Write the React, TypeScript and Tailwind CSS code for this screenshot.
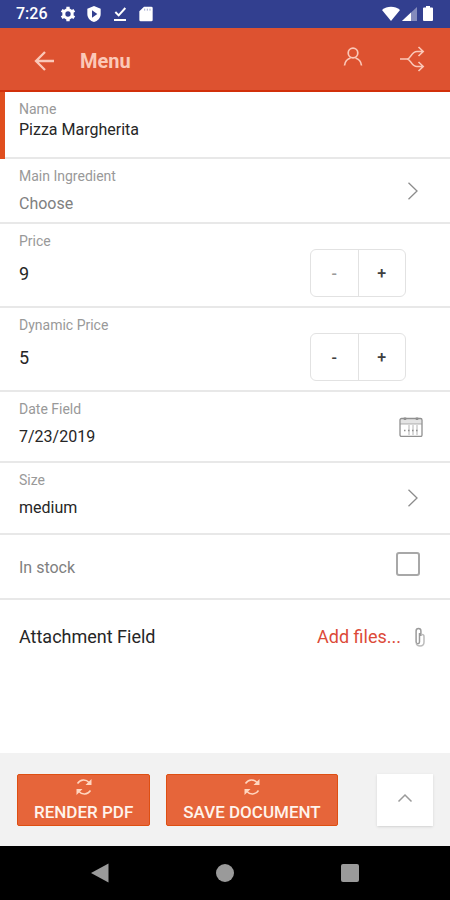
import { useState, type ReactNode } from "react";

const inputClass = "block h-6 w-full appearance-none bg-transparent p-0 leading-6 outline-none";

function StatusBar() {
  return (
    <div className="flex h-7 items-center justify-between bg-[#323f8f] px-4 text-white">
      <div className="flex items-center gap-[10px]">
        <span className="mr-[2px] text-base leading-6 font-medium">7:26</span>
        <svg viewBox="0 0 24 24" className="size-4" fill="none" stroke="currentColor">
          <circle cx="12" cy="12" r="6.300" strokeWidth="4.600" />
          <path
            d="M12 1v4M12 19v4M2.500 6.500l3.400 2M18.100 15.500l3.400 2M2.500 17.500l3.400-2M18.100 8.500l3.400-2"
            strokeWidth="5"
          />
        </svg>
        <svg viewBox="0 0 24 24" className="size-4" fill="currentColor">
          <path
            fillRule="evenodd"
            d="M12 0 2 4v8c0 6 4.300 10.500 10 12 5.700-1.500 10-6 10-12V4zM9 6.500 17 12l-8 5.500z"
          />
        </svg>
        <svg viewBox="0 0 24 24" className="size-4" fill="none" stroke="currentColor" strokeWidth="3">
          <path d="m5 9 5 5L20 3M3 21h18" />
        </svg>
        <svg viewBox="0 0 24 24" className="size-4" fill="currentColor">
          <path d="M9 1h11a2 2 0 0 1 2 2v18a2 2 0 0 1-2 2H4a2 2 0 0 1-2-2V8z" />
          <path d="M10 4v3M14 4v3M18 4v3" stroke="#7780b8" />
        </svg>
      </div>
      <div className="flex items-center">
        <svg viewBox="0 0 18 16" className="h-4 w-[18px]" fill="currentColor">
          <path d="M0 4C5-.3 13-.3 18 4L9 15z" />
        </svg>
        <svg viewBox="0 0 18 16" className="h-4 w-[18px]" fill="currentColor">
          <path d="M2 15 17 1v14z" opacity=".4" />
          <path d="M2 15 11 6.500V15z" />
        </svg>
        <svg viewBox="0 0 12 16" className="ml-1 h-4 w-3" fill="currentColor">
          <path d="M4 0h4v1.500h2q1 0 1 1V14q0 1-1 1H2q-1 0-1-1V2.500q0-1 1-1h2z" />
        </svg>
      </div>
    </div>
  );
}

function Header() {
  return (
    <header className="flex h-16 items-center border-b-2 border-[#d2300a] bg-[#dd5230] pt-1 pl-[34px] pr-[25px] text-[#fbc8b8]">
      <button type="button" aria-label="Back">
        <svg viewBox="0 0 20 20" className="size-5" fill="none" stroke="currentColor" strokeWidth="2.300">
          <path d="M20 10H2M11 1 2 10l9 9" />
        </svg>
      </button>
      <h1 className="ml-[26px] flex-1 text-xl leading-6 font-bold">Menu</h1>
      <button type="button" aria-label="Account" className="mb-2">
        <svg viewBox="0 0 20 20" className="size-5" fill="none" stroke="currentColor" strokeWidth="1.700">
          <circle cx="10" cy="6" r="4.800" />
          <path d="M1.500 18.500c.5-4 2.500-6.500 6-7.500M18.500 18.500c-.5-4-2.500-6.500-6-7.500" />
        </svg>
      </button>
      <button type="button" aria-label="Workflow" className="mb-1 ml-9">
        <svg viewBox="0 0 26 26" className="size-[26px]" fill="none" stroke="currentColor" strokeWidth="1.600">
          <path d="M1 13h7c4 0 4-7.500 10-7.500h5.500M8 13c4 0 4 7.500 10 7.500h5.500M19.500 1l4.700 4.500-4.700 4.500M19.500 16l4.700 4.500-4.700 4.500" />
        </svg>
      </button>
    </header>
  );
}

function Label({ htmlFor, children }: Readonly<{ htmlFor: string; children: ReactNode }>) {
  return (
    <label htmlFor={htmlFor} className="block text-sm leading-[18px] text-[#999999]">
      {children}
    </label>
  );
}

function SelectRow({
  id,
  label,
  options,
  placeholder,
  className,
}: Readonly<{ id: string; label: string; options: string[]; placeholder?: boolean; className: string }>) {
  return (
    <div className={`flex items-center border-b-2 border-[#e8e8e8] pl-[19px] pr-8 ${className}`}>
      <div className="flex flex-1 flex-col gap-[7px] self-start pt-2">
        <Label htmlFor={id}>{label}</Label>
        <select id={id} className={`${inputClass} text-base ${placeholder ? "text-[#808080]" : "text-[#262626]"}`}>
          {options.map((option) => (
            <option key={option}>{option}</option>
          ))}
        </select>
      </div>
      <svg viewBox="0 0 10 18" className="h-[18px] w-[10px]" fill="none" stroke="#8c8c8c" strokeWidth="1.300">
        <path d="m.5.8 8.500 8.200-8.500 8.200" />
      </svg>
    </div>
  );
}

function StepperRow({ id, label, initial, min }: Readonly<{ id: string; label: string; initial: number; min: number }>) {
  const [value, setValue] = useState(initial);

  return (
    <div className="flex min-h-[84px] border-b-2 border-[#e8e8e8] pl-[19px] pr-11">
      <div className="flex flex-1 flex-col gap-3 pt-2">
        <Label htmlFor={id}>{label}</Label>
        <input
          id={id}
          value={value}
          onChange={(e) => setValue(Number(e.target.value) || 0)}
          className={`${inputClass} text-lg text-[#262626]`}
        />
      </div>
      <div className="mt-[25px] flex h-12 w-24 rounded-md border border-[#e2e2e2] text-base font-medium">
        <button
          type="button"
          aria-label={`Decrease ${label}`}
          disabled={value <= min}
          onClick={() => setValue(value - 1)}
          className="flex-1 border-r border-[#e2e2e2] pt-[2px] text-[#404040] disabled:text-[#9a9a9a]"
        >
          -
        </button>
        <button
          type="button"
          aria-label={`Increase ${label}`}
          onClick={() => setValue(value + 1)}
          className="flex-1 pt-[2px] text-[#404040]"
        >
          +
        </button>
      </div>
    </div>
  );
}

function CalendarIcon() {
  return (
    <svg viewBox="0 0 24 20" className="h-5 w-6" fill="none" stroke="#909090">
      <path d="M1.500 2h21v5h-21z" fill="#e4e4e4" stroke="none" />
      <rect x="1" y="1.500" width="22" height="18" rx="1.500" strokeWidth="1.300" />
      <path d="M1 7h22" strokeWidth=".7" />
      <path d="M6 .5v2.500M18 .5v2.500" strokeWidth="2.500" />
      <path d="M10 8v10M14 8v10M18 8v10" stroke="#b4b4b4" />
      <path d="M5 13.500h14" strokeWidth="1.500" strokeDasharray="1.500 2.500" />
    </svg>
  );
}

function ActionButton({ children }: Readonly<{ children: ReactNode }>) {
  return (
    <button
      type="button"
      className="flex h-[52px] flex-col items-center rounded-xs border border-[#de4f12] bg-[#e6653a] px-4 pt-[3px] text-[17px] leading-6 font-medium text-[#fff4ec]"
    >
      <svg viewBox="0 0 16 18" className="mb-1 h-[18px] w-4 shrink-0" fill="none" stroke="#ffd6c0" strokeWidth="1.500">
        <path d="M1.500 5.500C4.500 1 10 1 13 4.500M14.500 12.500c-3 4.500-8.500 4.500-11.500 1" />
        <path d="M15.500 1v6H9.500zM.5 17v-6h6z" fill="#ffd6c0" stroke="none" />
      </svg>
      {children}
    </button>
  );
}

export default function App() {
  return (
    <div className="flex min-h-screen flex-col bg-white font-[Roboto,sans-serif] text-[#262626]">
      <StatusBar />
      <Header />
      <form className="flex flex-1 flex-col">
        <div className="border-l-[5px] border-[#e04e1e]">
          <div className="min-h-[67px] border-b-2 border-[#e8e8e8] pl-[14px] pt-2">
            <Label htmlFor="name">Name</Label>
            <input id="name" defaultValue="Pizza Margherita" className={`${inputClass} text-base`} />
          </div>
        </div>
        <SelectRow id="ingredient" label="Main Ingredient" options={["Choose"]} placeholder className="min-h-[65px]" />
        <StepperRow id="price" label="Price" initial={9} min={9} />
        <StepperRow id="dynamic-price" label="Dynamic Price" initial={5} min={0} />
        <div className="flex min-h-[71px] items-center border-b-2 border-[#e8e8e8] pl-[19px] pr-[27px]">
          <div className="flex flex-1 flex-col gap-[7px] self-start pt-2">
            <Label htmlFor="date">Date Field</Label>
            <input id="date" defaultValue="7/23/2019" className={`${inputClass} text-base`} />
          </div>
          <button type="button" aria-label="Pick a date">
            <CalendarIcon />
          </button>
        </div>
        <SelectRow id="size" label="Size" options={["medium"]} className="min-h-[72px]" />
        <div className="flex min-h-[65px] items-center border-b-2 border-[#e8e8e8] pl-[19px] pr-[30px]">
          <label htmlFor="stock" className="flex-1 pt-[2px] text-base leading-6 text-[#808080]">
            In stock
          </label>
          <input
            id="stock"
            type="checkbox"
            className="mb-[6px] size-6 appearance-none rounded-[3px] border-2 border-[#a8a8a8] checked:bg-[#e6653a]"
          />
        </div>
        <div className="flex items-center pl-[19px] pr-[25px] pt-[25px]">
          <span className="flex-1 text-lg leading-6">Attachment Field</span>
          <button type="button" className="flex items-center gap-3 text-lg leading-6 text-[#dc4a38]">
            Add files...
            <svg viewBox="0 0 12 20" className="h-5 w-3" fill="none" stroke="#9a9a9a" strokeWidth="1.500">
              <path d="M6.500 6v9a1.700 1.700 0 0 1-3.400 0V4a2.400 2.400 0 0 1 4.800 0v5" />
              <path d="M9 7.500c1.500 0 2 .8 2 2V15c0 2.500-1.500 4-4 4-2 0-3.200-.8-3.800-2.500" stroke="#bcbcbc" />
            </svg>
          </button>
        </div>
      </form>
      <footer className="flex items-start gap-4 bg-[#f2f2f2] px-[17px] pb-5 pt-[21px]">
        <ActionButton>RENDER PDF</ActionButton>
        <ActionButton>SAVE DOCUMENT</ActionButton>
        <button
          type="button"
          aria-label="More actions"
          className="ml-auto flex h-[52px] w-14 items-center justify-center bg-white shadow-sm"
        >
          <svg viewBox="0 0 16 10" className="mb-1 h-[10px] w-4" fill="none" stroke="#9a9a9a" strokeWidth="1.500">
            <path d="m1.500 8.500 6.500-6.500 6.500 6.500" />
          </svg>
        </button>
      </footer>
      <nav className="grid h-[54px] grid-cols-3 place-items-center bg-black px-[37px]">
        <button type="button" aria-label="System back">
          <svg viewBox="0 0 20 20" className="size-5" fill="#9a9a9a">
            <path d="M18.500.5v19L1 10z" />
          </svg>
        </button>
        <button type="button" aria-label="Home" className="size-[18px] rounded-full bg-[#9a9a9a]" />
        <button type="button" aria-label="Recent apps" className="size-[18px] rounded-xs bg-[#9a9a9a]" />
      </nav>
    </div>
  );
}
